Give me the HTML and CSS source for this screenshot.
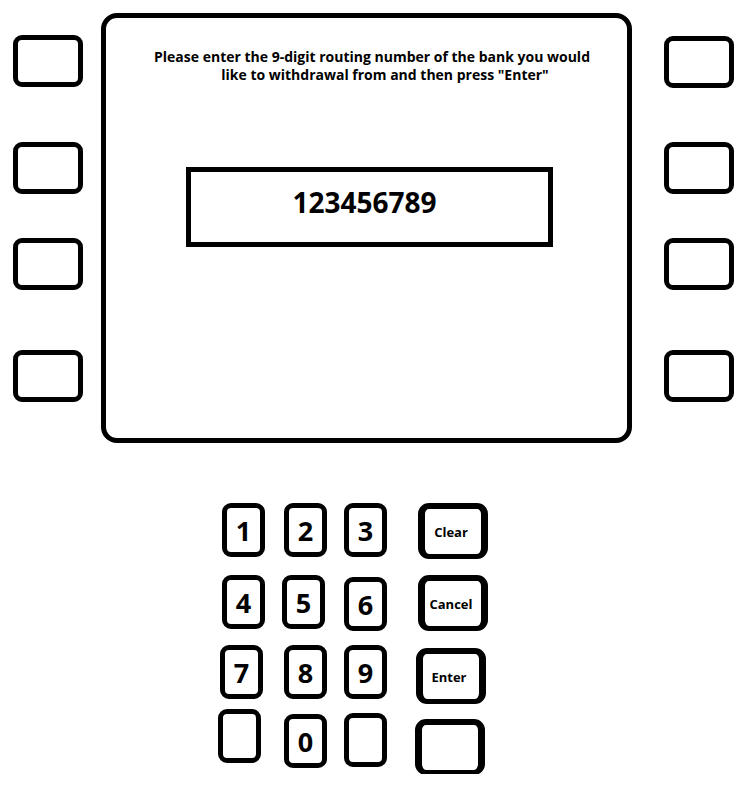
FILE: index.html
```html
<!DOCTYPE html>
<html lang="en">

<head>
    <meta charset="UTF-8">
    <meta name="viewport" content="width=device-width, initial-scale=1.0">
    <title>ATM - Routing Number</title>
    <link rel="stylesheet" href="styles.css">
</head>

<body>
    <div class="atm">
        <div class="side side-left">
            <div class="side-btn"></div>
            <div class="side-btn"></div>
            <div class="side-btn"></div>
            <div class="side-btn"></div>
        </div>

        <div class="screen">
            <p class="prompt">
                <span class="prompt-line">Please enter the 9-digit routing number of the bank you would</span>
                <span class="prompt-line prompt-line-2">like to withdrawal from and then press "Enter"</span>
            </p>
            <div class="entry">123456789</div>
        </div>

        <div class="side side-right">
            <div class="side-btn"></div>
            <div class="side-btn"></div>
            <div class="side-btn"></div>
            <div class="side-btn"></div>
        </div>
    </div>

    <!-- keypad -->
    <div class="keypad">
        <div class="key">1</div>
        <div class="key">2</div>
        <div class="key">3</div>
        <div class="key func">Clear</div>

        <div class="key">4</div>
        <div class="key shift-left">5</div>
        <div class="key shift-down">6</div>
        <div class="key func">Cancel</div>

        <div class="key shift-left">7</div>
        <div class="key">8</div>
        <div class="key">9</div>
        <div class="key func enter">Enter</div>

        <div class="key blank-left"></div>
        <div class="key shift-down">0</div>
        <div class="key shift-down-sm"></div>
        <div class="key func blank-big"></div>
    </div>
</body>

</html>
```

FILE: styles.css
```css
body {
    margin: 0;
    background-color: white;
    color: black;
    font-family: "Open Sans", "Noto Sans", sans-serif;
    font-weight: bold;
}

.atm {
    display: flex;
    align-items: flex-start;
    padding: 13px 0 0 13px;
}

.side {
    display: flex;
    flex-direction: column;
    width: 70px;
}

.side-left {
    padding-top: 22px;
    margin-right: 18px;
}

.side-right {
    padding-top: 23px;
    margin-left: 32px;
}

.side-btn {
    height: 52px;
    border: 5px solid black;
    border-radius: 9px;
    box-sizing: border-box;
}

.side-left .side-btn:nth-child(2) {
    margin-top: 55px;
}

.side-right .side-btn:nth-child(2) {
    margin-top: 54px;
}

.side .side-btn:nth-child(3) {
    margin-top: 44px;
}

.side .side-btn:nth-child(4) {
    margin-top: 60px;
}

.screen {
    width: 531px;
    height: 430px;
    border: 5px solid black;
    border-radius: 16px;
    box-sizing: border-box;
}

.prompt {
    margin: 0;
    padding: 30px 0 0 11px;
    font-size: 14px;
    line-height: 18px;
    text-align: center;
}

.prompt-line {
    display: block;
}

.prompt-line-2 {
    padding-left: 26px;
}

.entry {
    width: 367px;
    height: 80px;
    margin: 83px 0 0 80px;
    padding: 0 10px 10px 0;
    border: 5px solid black;
    box-sizing: border-box;
    font-size: 28px;
    line-height: 60px;
    text-align: center;
}

.keypad {
    display: grid;
    grid-template-columns: 62px 60px 74px 70px;
    grid-template-rows: 72px 70px 67px 62px;
    margin: 60px 0 0 222px;
}

.key {
    display: flex;
    align-items: center;
    justify-content: center;
    width: 43px;
    height: 54px;
    border: 5px solid black;
    border-radius: 9px;
    box-sizing: border-box;
    font-size: 27px;
}

.key.func {
    width: 70px;
    height: 56px;
    padding-right: 4px;
    border-width: 6px 7px 5px;
    border-radius: 11px;
    font-size: 13px;
}

.shift-left {
    margin-left: -2px;
}

.shift-down {
    margin-top: 2px;
}

.shift-down-sm {
    margin-top: 1px;
}

.key.enter {
    margin: 3px 0 0 -2px;
}

.blank-left {
    margin: -3px 0 0 -4px;
}

.key.blank-big {
    margin: 7px 0 0 -3px;
}
```
